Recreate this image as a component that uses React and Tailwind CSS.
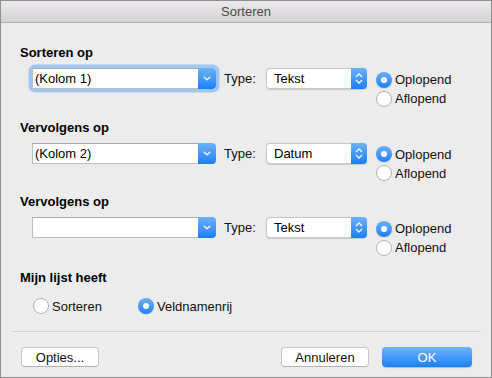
import React from "react";

function Chevron() {
  return (
    <svg width="8" height="5" viewBox="0 0 8 5">
      <path d="M1.2 1.2L4 3.8l2.8-2.6" stroke="white" strokeWidth="1.3" fill="none" strokeLinecap="round" strokeLinejoin="round" />
    </svg>
  );
}

function UpDown() {
  return (
    <svg width="8" height="13" viewBox="0 0 8 13">
      <path d="M1.3 4.6L4 2l2.7 2.6M1.3 8.4L4 11l2.7-2.6" stroke="white" strokeWidth="1.3" fill="none" strokeLinecap="round" strokeLinejoin="round" />
    </svg>
  );
}

function ComboBox({ value, focused }) {
  return (
    <div className={focused ? "flex h-[21px] w-[184px] rounded-[3px] shadow-[0_0_0_3.5px_#a2c6f2]" : "flex h-[21px] w-[184px] rounded-[3px]"}>
      <div className="flex-1 bg-white border border-[#bdbdbd] border-t-[#a9a9a9] border-r-0 flex items-center pl-[2px] text-[13px] text-black leading-none">
        {value}
      </div>
      <div className="w-[18px] rounded-r-[4px] bg-gradient-to-b from-[#6ab3fa] to-[#1a7ef8] flex items-center justify-center">
        <Chevron />
      </div>
    </div>
  );
}

function PopUp({ value }) {
  return (
    <div className="flex h-[21px] w-[101px] rounded-[4px] shadow-[0_0.5px_1px_rgba(0,0,0,0.15)]">
      <div className="flex-1 bg-white border border-[#c8c8c8] border-r-0 rounded-l-[4px] flex items-center pl-[7px] text-[13px] text-black leading-none">
        {value}
      </div>
      <div className="w-[16px] rounded-r-[4px] bg-gradient-to-b from-[#6ab3fa] to-[#1a7ef8] flex items-center justify-center">
        <UpDown />
      </div>
    </div>
  );
}

function Radio({ checked, label }) {
  return (
    <div className="flex items-center gap-[3px] h-[19px]">
      {checked ? (
        <div className="w-[16px] h-[16px] rounded-full bg-gradient-to-b from-[#6ab2f9] to-[#1b80f8] flex items-center justify-center shadow-[0_0.5px_1px_rgba(0,0,0,0.2)]">
          <div className="w-[6px] h-[6px] rounded-full bg-white" />
        </div>
      ) : (
        <div className="w-[16px] h-[16px] rounded-full bg-white border border-[#b3b3b3]" />
      )}
      <span className="text-[13px] text-[#111] leading-none">{label}</span>
    </div>
  );
}

function Section({ title, value, type, focused }) {
  return (
    <div className="h-[74.5px] flex flex-col">
      <div className="pl-[19px] h-[16px] leading-[16px] text-[13px] font-bold text-black">{title}</div>
      <div className="mt-[7px] flex items-start">
        <div className="ml-[31px] flex items-center h-[21px]">
          <ComboBox value={value} focused={focused} />
          <span className="ml-[8px] w-[42px] text-[13px] text-[#111] leading-none">Type:</span>
          <PopUp value={type} />
        </div>
        <div className="ml-[9px] mt-[2px] flex flex-col">
          <Radio checked label="Oplopend" />
          <Radio label="Aflopend" />
        </div>
      </div>
    </div>
  );
}

function Button({ children, primary, className }) {
  return primary ? (
    <div className={"h-[20px] rounded-[4px] bg-gradient-to-b from-[#6db4fb] to-[#1b80f8] text-white flex items-center justify-center text-[13px] leading-none shadow-[0_0.5px_1px_rgba(0,0,0,0.2)] " + className}>
      {children}
    </div>
  ) : (
    <div className={"h-[20px] rounded-[4px] bg-white border border-[#c6c6c6] border-b-[#b3b3b3] text-[#111] flex items-center justify-center text-[13px] leading-none " + className}>
      {children}
    </div>
  );
}

export default function App() {
  return (
    <div className="w-[492px] h-[378px] border border-[#8f8f8f] bg-[#ececec] flex flex-col font-['Liberation_Sans',Arial,sans-serif] overflow-hidden">
      <div className="h-[22px] shrink-0 border-b border-[#b0b0b0] bg-gradient-to-b from-[#ebe9eb] to-[#d4d2d4] flex items-center justify-center">
        <span className="text-[13px] text-[#4a4a4a] leading-none">Sorteren</span>
      </div>
      <div className="flex-1 pt-[22px] flex flex-col">
        <Section title="Sorteren op" value="(Kolom 1)" type="Tekst" focused />
        <Section title="Vervolgens op" value="(Kolom 2)" type="Datum" />
        <Section title="Vervolgens op" value="" type="Tekst" />
        <div className="mt-[1.5px] pl-[19px] h-[16px] leading-[16px] text-[13px] font-bold text-black">Mijn lijst heeft</div>
        <div className="mt-[10px] flex items-center h-[20px]">
          <div className="ml-[32px] w-[105px]">
            <Radio label="Sorteren" />
          </div>
          <Radio checked label="Veldnamenrij" />
        </div>
      </div>
      <div className="ml-[11px] mr-[10px] h-px bg-[#d3d3d3] shrink-0" />
      <div className="pt-[15px] pb-[10px] flex items-center pl-[20px] pr-[19px] shrink-0">
        <Button className="w-[78px]">Opties...</Button>
        <div className="flex-1" />
        <Button className="w-[88px]">Annuleren</Button>
        <Button primary className="w-[90px] ml-[13px]">OK</Button>
      </div>
    </div>
  );
}
